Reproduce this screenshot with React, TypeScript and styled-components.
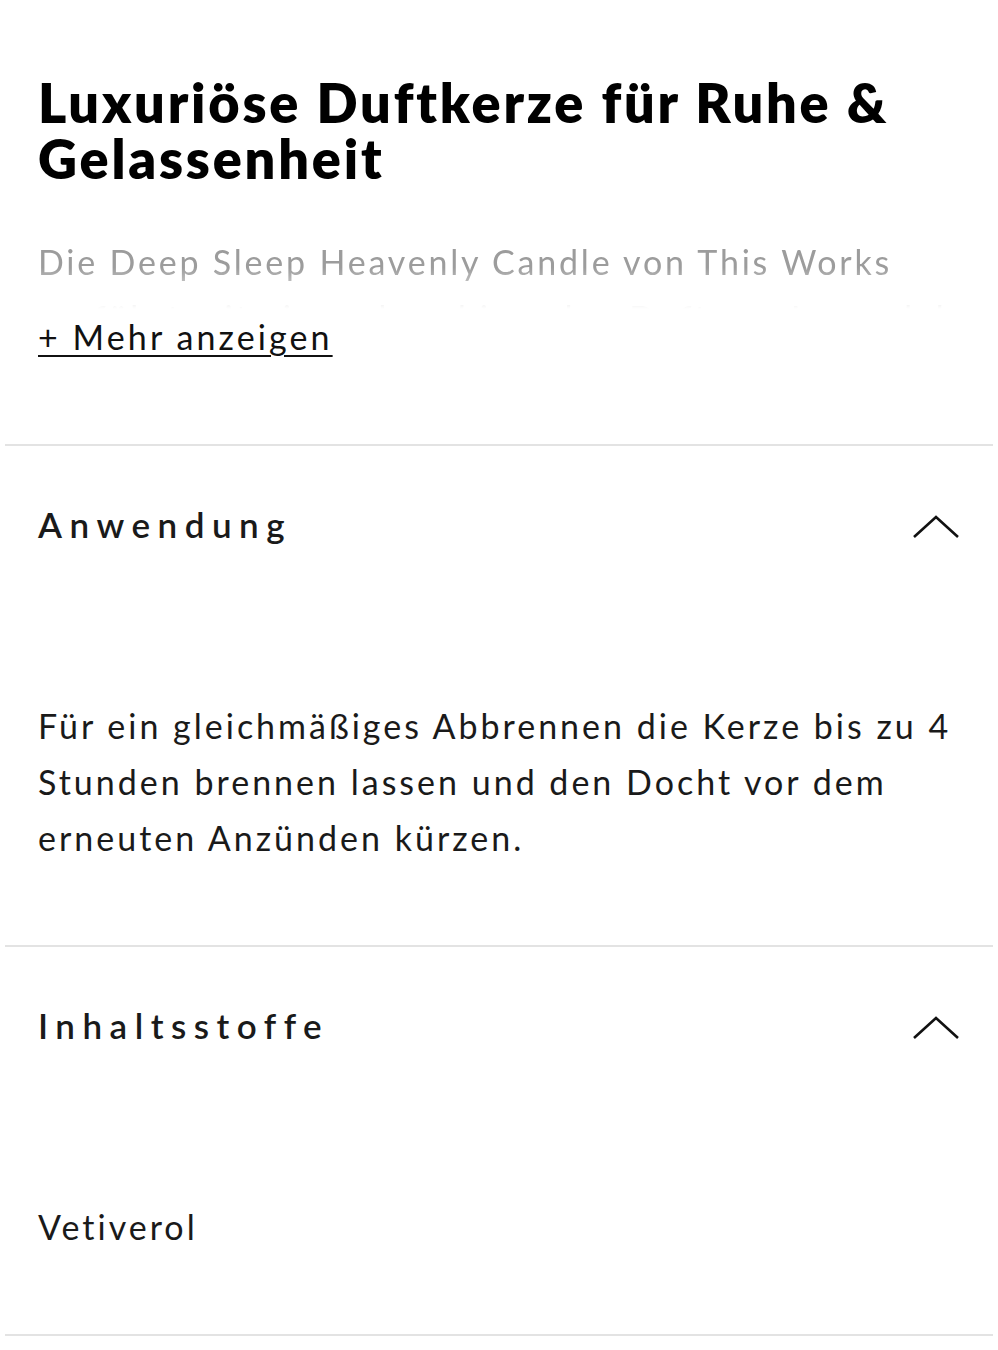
import React from 'react';
import styled, { createGlobalStyle } from 'styled-components';

const GlobalStyle = createGlobalStyle`
  html, body {
    margin: 0;
    padding: 0;
    background: #ffffff;
  }
  body {
    font-family: Lato, "Open Sans", "Liberation Sans", sans-serif;
    color: #1a1a1a;
    -webkit-font-smoothing: antialiased;
  }
`;

const Page = styled.div`
  width: 998px;
  padding: 0 5px;
  box-sizing: border-box;
`;

const Intro = styled.header`
  padding: 75px 33px 79px;
`;

const Title = styled.h1`
  margin: 0;
  font-size: 54px;
  line-height: 56px;
  font-weight: 800;
  color: #000;
  letter-spacing: 2.8px;
`;

const Description = styled.p`
  margin: 47px 0 0;
  height: 75px;
  overflow: hidden;
  font-size: 34px;
  line-height: 56px;
  letter-spacing: 2.8px;
  color: #9c9c9c;
  -webkit-mask-image: linear-gradient(to bottom, #000 45%, transparent 100%);
  mask-image: linear-gradient(to bottom, #000 45%, transparent 100%);
`;

const MoreLink = styled.a`
  display: inline-block;
  font-size: 34px;
  line-height: 56px;
  letter-spacing: 3.1px;
  color: #111;
  text-decoration: underline;
  text-decoration-thickness: 2px;
  text-underline-offset: 5px;
  cursor: pointer;
`;

const Section = styled.section`
  border-top: 2px solid #e3e3e3;
  padding: 58px 33px 79px;
  &:last-child {
    border-bottom: 2px solid #e3e3e3;
  }
`;

const SectionHeader = styled.div`
  display: flex;
  align-items: center;
  justify-content: space-between;
  height: 40px;
`;

const SectionTitle = styled.h2`
  margin: 0;
  font-size: 35px;
  line-height: 40px;
  font-weight: 600;
  letter-spacing: 7.5px;
  color: #1a1a1a;
`;

const Chevron = styled.svg`
  width: 48px;
  height: 24px;
  margin-top: 6px;
  flex-shrink: 0;
`;

const SectionBody = styled.p`
  margin: 154px 0 0;
  font-size: 34px;
  line-height: 56px;
  letter-spacing: 3px;
  color: #1a1a1a;
`;

const ChevronUp = () => (
  <Chevron viewBox="0 0 48 24" fill="none">
    <polyline points="2,22 24,2 46,22" stroke="#111" strokeWidth="2.6" />
  </Chevron>
);

const sections = [
  {
    title: 'Anwendung',
    body: 'Für ein gleichmäßiges Abbrennen die Kerze bis zu 4 Stunden brennen lassen und den Docht vor dem erneuten Anzünden kürzen.',
  },
  {
    title: 'Inhaltsstoffe',
    body: 'Vetiverol',
  },
];

const App = () => (
  <>
    <GlobalStyle />
    <Page>
      <Intro>
        <Title>Luxuriöse Duftkerze für Ruhe &amp; Gelassenheit</Title>
        <Description>
          Die Deep Sleep Heavenly Candle von This Works verführt mit einem beruhigenden Duft aus Lavendel, Kamille und Vetiver.
        </Description>
        <MoreLink>+ Mehr anzeigen</MoreLink>
      </Intro>
      {sections.map((s) => (
        <Section key={s.title}>
          <SectionHeader>
            <SectionTitle>{s.title}</SectionTitle>
            <ChevronUp />
          </SectionHeader>
          <SectionBody>{s.body}</SectionBody>
        </Section>
      ))}
    </Page>
  </>
);

export default App;
